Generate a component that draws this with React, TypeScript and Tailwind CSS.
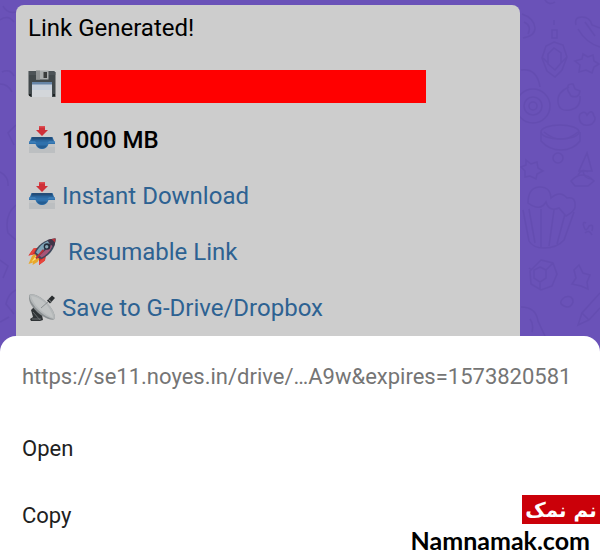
import React from "react";

const LINK = "text-[#2d6292]";

function FloppyIcon() {
  return (
    <svg viewBox="0 0 28 28" className="size-7 shrink-0" aria-hidden="true">
      <path d="M1 1h25l1.5 1.5V27H2.5L.5 25V1z" fill="#41484b" />
      <path d="M1 1h25l1.5 1.5V5H1z" fill="#535b5f" opacity=".6" />
      <path d="M8 0.5h12.500v9H8z" fill="#a9adae" />
      <path d="M8 .5h4v9H8z" fill="#8e9293" />
      <path d="M15.500 2h3.500v6h-3.500z" fill="#3a3d3d" />
      <path d="M4 12h20v15H4z" fill="#c7d0dc" />
      <path d="M4 12h20v2.500H4z" fill="#6685a8" />
      <path d="M4 20h20v7H4z" fill="#d3d6da" />
      <path d="M1 24h2v2H1zM25 24h2v2h-2z" fill="#1d2021" />
    </svg>
  );
}

function InboxIcon() {
  return (
    <svg viewBox="0 0 28 28" className="size-7 shrink-0" aria-hidden="true">
      <path d="M1 16.500h26V27H1z" fill="#c3c5c6" />
      <path d="M1 21h26v6H1z" fill="#bcbfc1" />
      <path d="M3.500 11h21l2.500 6.500H1z" fill="#28659d" />
      <path d="M4.500 11h19l.8 2.500H3.700z" fill="#234d78" />
      <path d="M1 15.500h26V18h-6.500c-1 3.500-3.500 5-6.500 5s-5.500-1.500-6.500-5H1z" fill="#2f71ac" />
      <path d="M1 15.500h6l1.500 1H1zM21 15.500h6v1h-7.500z" fill="#4b8cc4" />
      <path d="M9 19.500c1 2 3 3 5 3s4-1 5-3z" fill="#245d92" />
      <path d="M11 0h6v4h3l-6 6L8 4h3z" fill="#cf3038" />
      <path d="M11 0h6v1.500h-6z" fill="#dc4f53" />
    </svg>
  );
}

function RocketIcon() {
  return (
    <svg viewBox="0 0 28 28" className="size-7 shrink-0" aria-hidden="true">
      <path d="M8 15L4 18 .5 26l4.500-1.500L4.500 27l5-3 3-5z" fill="#e8a72a" />
      <path d="M8 17.500L3.500 24l5.500-3.500z" fill="#f9e37a" />
      <path d="M12 9.500L5.500 10.500.5 17.500l7.500-1.500zM18.500 15l-1.500 7.500L11 27V18z" fill="#cf2a2c" />
      <path d="M5.500 10.500L.5 17.500l4-1 4-6.400zM17 22.500L11 27v-3.500l5.500-4z" fill="#e8463c" />
      <path d="M6.500 15C9.500 7 16 1.500 27.500.5c0 10-6 17-14 20.500L10 20z" fill="#3f4a5c" />
      <path d="M8 14.500C11.500 7.500 17.500 2.500 26 1.500c-5 5-10 9-15 15.500z" fill="#7fa5b8" />
      <path d="M25.500 5c-2 7-6 11.500-12 14.500l-2-2z" fill="#a75578" />
      <path d="M19.500 2C22.500 1 25 .7 27.500.5c0 3-.5 5.300-1.500 8C23 7.500 20.500 5.500 19.500 2z" fill="#413548" />
      <path d="M23.500 1L27.500.5l-.5 4z" fill="#b8343c" />
      <circle cx="19" cy="8.500" r="3.300" fill="#242b3a" />
      <circle cx="18.700" cy="8.700" r="1.700" fill="#86a7b4" />
      <path d="M15.500 12L8 20.500" stroke="#b8303a" strokeWidth="2" />
    </svg>
  );
}

function DishIcon() {
  return (
    <svg viewBox="0 0 28 28" className="size-7 shrink-0" aria-hidden="true">
      <path d="M6 13l8 8 1 5-3 1H3l-1-2 3-2-2-7z" fill="#303436" />
      <path d="M5 18l7 8M4 25h9" stroke="#686d6f" strokeWidth="1" />
      <path d="M2 .5C6-.5 13 3 19 9c6 6 9 13 7.500 16-1 1.500-7 .5-13-3.500C7 17 1 10 1 4c0-2 0-3 1-3.500z" fill="#8b9092" />
      <path d="M2 .5C6-.5 13 3 19 9c6 6 9 13 7.500 16C23 25.500 15 21 9 15 3 9 .5 3 2 .5z" fill="#b4b8b9" />
      <path d="M3 2c5 0 11 4 15 8 4 5 7 10 7 14C17 21 5 11 3 2z" fill="#cacccc" opacity=".6" />
      <path d="M13 14l8-7" stroke="#8a8f91" strokeWidth="1" fill="none" />
      <path d="M19 6.500l5-5 3 2.500-5 5.500z" fill="#292d2f" />
      <path d="M20.500 5.500l3 2.500" stroke="#85898b" strokeWidth="1" />
    </svg>
  );
}

/* faint doodles on the chat wallpaper */
function Wallpaper() {
  return (
    <>
      <svg
        viewBox="500 0 100 352"
        className="absolute top-0 right-0 h-[352px] w-[100px]"
        fill="none"
        stroke="#5b45a5"
        strokeWidth="1.500"
        opacity=".35"
        aria-hidden="true"
      >
        <path d="M545 0q4 6 10 2M522 14q12 4 13 14q0 8-12 10M524 22q8 4 4 12" />
        <path d="M554 20v5m-2 5h5v8h-5z" />
        <path d="M576 25q-2-8 6-8t10 8l8 3M578 29q8 14 22 18M585 22l10 14" />
        <path d="M554 42l9 3 4 12-5 13-7 7-8-6-5-13 4-12zM554 48l7 5v10l-6 7-7-6v-10zM543 58l5 5M567 57l-6 6" />
        <path d="M583 54l5 3 5-2 1 6 5 3-5 3-2 6-6-3-7 2 1-7-5-4 7-2z" />
        <path d="M521 70q16-2 19 17" />
        <circle cx="533" cy="106" r="17" />
        <circle cx="533" cy="106" r="9" />
        <circle cx="533" cy="106" r="4" />
        <path d="M569 87q-12 5-11 15t12 8q11-2 10-14M568 91q-2-8 5-7l2 5 5 2q-1 8-9 5z" />
        <path d="M580 114q5-4 7 1q5-7 7 1q3 3-2 8q-7 3-11-1-3-5-1-9z" />
        <ellipse cx="560" cy="132" rx="19" ry="7" />
        <path d="M541 132v9q8 9 20 9t19-9v-9M544 132q8 7 17 7t17-7" />
        <circle cx="558" cy="158" r="5" />
        <path d="M526 160l5 4 6-2 1 6 5 3-6 3-1 5-6-3-5 1v-6l-4-4 5-2zM587 153l5 18h-13zM583 171q1 8 9 8" />
        <path d="M571 181q11-12 23 0l-6 5h-13zM578 175q4-7 10-3" />
        <path d="M528 203q0-15 11-16t12 11q9-8 16 0q9-2 8 9q0 4-9 9l-7-8q-10 4-13-6-6 10-18 1zM523 210l6 31q4 7 15 7 13 0 20-8l10-28M529 209l6 34M541 209v38M554 210l-5 36M565 214l-8 30" />
        <path d="M586 223q-4-2-2 4t5-1q5-3 3 5M585 233q4-4 7 2" />
        <path d="M541 260l12 3 4 11-5 12-11 4-10-6-1-13zM540 267l6 3v8l-6 4-6-4v-8zM532 270l-3-2M546 270l7-7M540 282v8" />
        <path d="M579 265l4 8 7 2-3 7 1 7-7-3-9-2 4-6-2-8zM565 297q8-2 8 5-2 7-9 4t1-9z" />
        <path d="M600 293l-18 20-4 12 11-5 11-12M582 313l7 7M521 307q15 0 17 14l7 15M530 319q4 5 2 13" />
      </svg>
      <svg
        viewBox="0 0 16 352"
        className="absolute top-0 left-0 h-[352px] w-4"
        fill="none"
        stroke="#5b45a5"
        strokeWidth="1.500"
        opacity=".35"
        aria-hidden="true"
      >
        <path d="M3 6q4 8 13 6M0 20q8-6 14 2M2 72q8-4 12 4M0 84q8 0 12 8M16 125l-8 8 6 12M0 172q9 5 8 14M16 205q-12 10-8 28l8 7M0 260l8 6-5 12M16 290q-8 4-10 14l8 10M0 322l9-5" />
      </svg>
    </>
  );
}

interface LinkRow {
  icon: React.ReactNode;
  label: string;
  indent?: boolean;
}

const links: LinkRow[] = [
  { icon: <InboxIcon />, label: "Instant Download" },
  { icon: <RocketIcon />, label: "Resumable Link", indent: true },
  { icon: <DishIcon />, label: "Save to G-Drive/Dropbox" },
];

const actions = ["Open", "Copy"];

export default function App() {
  return (
    <div className="relative flex min-h-screen flex-col bg-[#6a52b8] font-[Roboto,sans-serif]">
      <Wallpaper />

      <main className="relative ml-4 mr-20 mt-[5px] flex flex-col gap-7 rounded-t-lg bg-[#cdcdcd] px-3 pt-[9px] pb-[14px] text-2xl leading-7 text-black">
        <p>Link Generated!</p>
        <div className="flex h-7 items-start gap-[5px]">
          <FloppyIcon />
          <div className="h-[33px] w-[365px] bg-[#ff0000]" />
        </div>
        <div className="flex gap-[6px]">
          <InboxIcon />
          <strong className="font-medium">1000 MB</strong>
        </div>
        {links.map(link => (
          <div key={link.label} className="flex gap-[6px]">
            {link.icon}
            <a href="#" className={link.indent ? `${LINK} pl-[6px]` : LINK}>
              {link.label}
            </a>
          </div>
        ))}
      </main>

      <section className="relative z-10 flex flex-1 flex-col rounded-t-2xl bg-white pt-[27px] text-[22px] leading-7">
        <p className="mb-6 truncate px-[22px] text-[#757575]">
          https://se11.noyes.in/drive/…A9w&amp;expires=1573820581
        </p>
        {actions.map(action => (
          <button
            key={action}
            type="button"
            className="h-[67px] px-[22px] text-left text-[#212121]"
          >
            {action}
          </button>
        ))}

        <div className="absolute right-0 bottom-0 flex flex-col items-end">
          <span
            lang="fa"
            dir="rtl"
            className="flex h-[29px] w-[78px] items-center justify-center bg-[#cb0009] font-['DejaVu_Sans',sans-serif] text-xl leading-7 font-bold whitespace-nowrap text-white"
          >
            نم نمک
          </span>
          <span className="pr-[10px] font-[Lato,sans-serif] text-[25px] leading-8 font-bold text-black">
            Namnamak.com
          </span>
        </div>
      </section>
    </div>
  );
}
